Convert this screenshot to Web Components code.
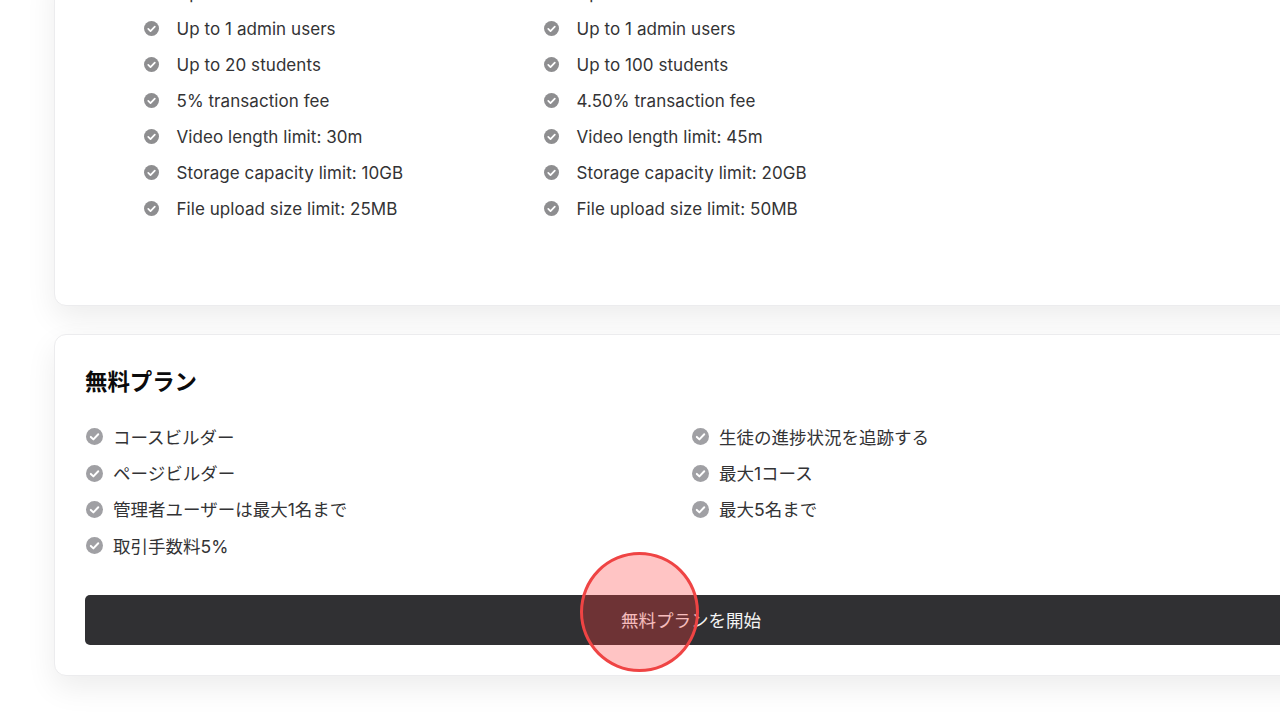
<!DOCTYPE html>
<html lang="ja"><head><meta charset="utf-8">
<style>
html,body{margin:0;height:714px;overflow:hidden;background:#fff;font-family:Inter,"Noto Sans CJK JP",sans-serif;color:#242426}
</style></head><body>
<template id="t-check"><style>
:host{display:flex;align-items:center;font-size:var(--fs,16px);height:var(--row,36px);color:#333335;white-space:nowrap;letter-spacing:var(--ls,0)}
svg{flex:none;width:var(--ic,16px);height:var(--ic,16px);margin-left:var(--il,0);margin-right:var(--ig,17px);position:relative;top:var(--it,-1px)}
</style><svg viewBox="0 0 24 24"><circle cx="12" cy="12" r="12" fill="var(--icc,#8e8e90)"/><path d="M6.8 12.6l3.6 3.5 6.9-7.2" fill="none" stroke="#fff" stroke-width="2.8" stroke-linecap="round" stroke-linejoin="round"/></svg><span><slot></slot></span></template>
<template id="t-card"><style>
:host{display:block;box-sizing:border-box;width:1273px;background:#fff;border:1px solid #ececee;border-radius:12px;box-shadow:0 12px 30px rgba(0,0,0,.075)}
</style><slot></slot></template>
<template id="t-top"><style>
:host{display:grid;grid-template-columns:400px 400px;height:340px;box-sizing:border-box;padding:10px 0 0 89px;--fs:17px;--ls:.06px;--row:36px;--ic:15px;--ig:17.5px}
</style><div><slot name="a"></slot></div><div><slot name="b"></slot></div></template>
<template id="t-plan"><style>
:host{display:block;box-sizing:border-box;padding:30px 29px 30px 30px;height:340px;--fs:17.5px;--row:36.4px;--ic:17px;--il:.5px;--ig:10.5px;--icc:#a0a0a4;--it:.5px}
h2{margin:0;font-size:22.4px;line-height:34px;font-weight:700;color:#0b0b0c}
.g{display:grid;grid-template-columns:606px 606px;margin-top:19px;height:147px}
button{display:block;box-sizing:border-box;width:1212px;height:50px;margin-top:30px;padding:0 0 2px;border:0;border-radius:5px;background:#303033;color:#f4f4f4;font:inherit;font-size:17.5px}
</style><h2><slot name="title"></slot></h2><div class="g"><div><slot name="a"></slot></div><div><slot name="b"></slot></div></div><button><slot name="cta"></slot></button></template>
<template id="t-tap"><style>
:host{position:absolute;left:580px;top:552px;width:119px;height:120px;box-sizing:border-box;border-radius:50%;border:3px solid #ef4444;background:rgba(255,60,60,.3)}
</style></template>
<template id="t-page"><style>
:host{display:flex;flex-direction:column;gap:28px;margin:-36px 0 0 54px;width:1273px}
</style><slot></slot></template>

<x-page>
<x-card>
<x-top>
<x-check slot="a">Up to 1 courses</x-check>
<x-check slot="a">Up to 1 admin users</x-check><x-check slot="a">Up to 20 students</x-check><x-check slot="a">5% transaction fee</x-check><x-check slot="a">Video length limit: 30m</x-check><x-check slot="a">Storage capacity limit: 10GB</x-check><x-check slot="a">File upload size limit: 25MB</x-check>
<x-check slot="b">Up to 1 courses</x-check>
<x-check slot="b">Up to 1 admin users</x-check><x-check slot="b">Up to 100 students</x-check><x-check slot="b">4.50% transaction fee</x-check><x-check slot="b">Video length limit: 45m</x-check><x-check slot="b">Storage capacity limit: 20GB</x-check><x-check slot="b">File upload size limit: 50MB</x-check>
</x-top>
</x-card>
<x-card>
<x-plan>
<span slot="title">無料プラン</span>
<x-check slot="a">コースビルダー</x-check><x-check slot="a">ページビルダー</x-check><x-check slot="a">管理者ユーザーは最大1名まで</x-check><x-check slot="a">取引手数料5%</x-check>
<x-check slot="b">生徒の進捗状況を追跡する</x-check><x-check slot="b">最大1コース</x-check><x-check slot="b">最大5名まで</x-check>
<span slot="cta">無料プランを開始</span>
</x-plan>
</x-card>
</x-page>
<x-tap></x-tap>
<script>
for (const [n,t] of [['x-check','t-check'],['x-card','t-card'],['x-top','t-top'],['x-plan','t-plan'],['x-tap','t-tap'],['x-page','t-page']]) {
  customElements.define(n, class extends HTMLElement {
    constructor(){super();this.attachShadow({mode:'open'}).appendChild(document.getElementById(t).content.cloneNode(true));}
  });
}
</script>
</body></html>
